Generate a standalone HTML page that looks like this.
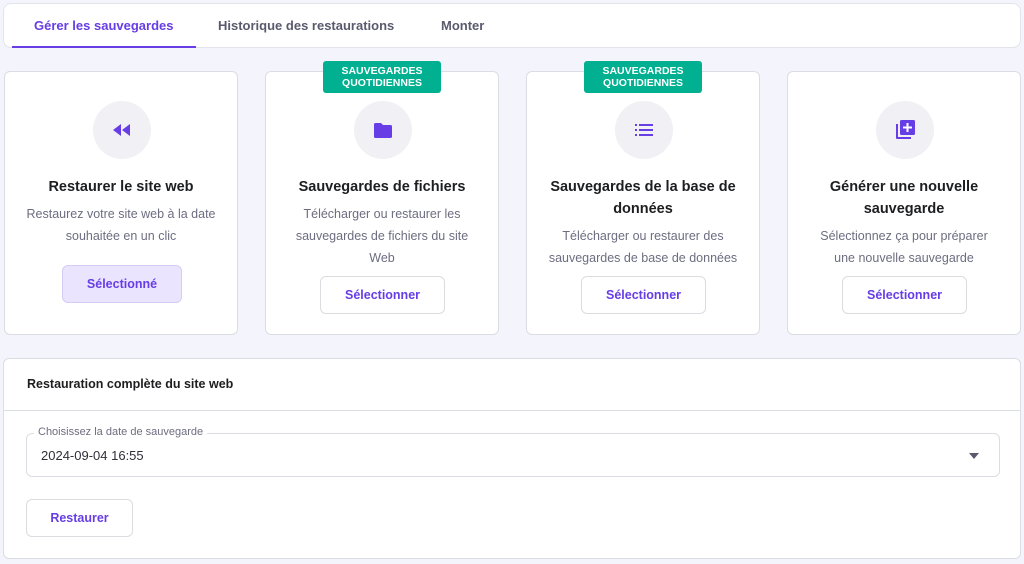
<!DOCTYPE html>
<html><head><meta charset="utf-8"><style>
*{box-sizing:border-box;margin:0;padding:0}
body{width:1024px;height:564px;background:#f4f4fd;font-family:"Liberation Sans",sans-serif;position:relative;overflow:hidden}
.tabs{position:absolute;left:3px;top:3px;width:1018px;height:45px;background:#fff;border:1px solid #e3e3ea;border-radius:8px}
.tab{position:absolute;top:14px;font-size:13px;font-weight:bold;color:#5a5a6e}
.tab.a{color:#673de6}
.ul{position:absolute;left:8px;top:42px;width:184px;height:2px;background:#673de6}
.card{position:absolute;top:71px;width:234px;height:264px;background:#fff;border:1px solid #dcdce3;border-radius:6px;text-align:center}
.circ{position:absolute;left:88px;top:29px;width:58px;height:58px;border-radius:50%;background:#f0f0f5;display:flex;align-items:center;justify-content:center}
.title{position:absolute;left:0;right:0;top:104px;font-size:14.5px;font-weight:bold;color:#1d1e20;line-height:22px;padding:0 20px}
.desc{position:absolute;left:0;right:0;font-size:12.5px;color:#6d6d80;line-height:22px;padding:0 10px}
.btn{position:absolute;height:38px;border:1px solid #dadce0;border-radius:6px;background:#fff;color:#673de6;font-weight:bold;font-size:12.5px;display:flex;align-items:center;justify-content:center}
.badge{position:absolute;top:61px;width:118px;height:32px;background:#00b090;border-radius:3px;color:#fff;font-size:10.5px;font-weight:bold;line-height:12px;text-align:center;padding-top:4px}
.bot{position:absolute;left:3px;top:358px;width:1018px;height:201px;background:#fff;border:1px solid #dcdce3;border-radius:6px}
</style></head><body>
<div class="tabs">
<div class="tab a" style="left:30px">Gérer les sauvegardes</div>
<div class="tab" style="left:214px">Historique des restaurations</div>
<div class="tab" style="left:437px">Monter</div>
<div class="ul"></div>
</div>

<div class="card" style="left:4px">
<div class="circ"><svg width="18" height="12" viewBox="0 0 18 12"><path d="M8 0v12L0 6zM17 0v12L9 6z" fill="#673de6"/></svg></div>
<div class="title">Restaurer le site web</div>
<div class="desc" style="top:131px">Restaurez votre site web à la date souhaitée en un clic</div>
<div class="btn" style="left:57px;top:193px;width:120px;background:#ebe4ff;border-color:#d5cdf5">Sélectionné</div>
</div>

<div class="card" style="left:265px">
<div class="circ"><svg width="18" height="15" viewBox="0 0 18 15"><path d="M0 1.5A1.5 1.5 0 0 1 1.5 0H7l2 2h7.5A1.5 1.5 0 0 1 18 3.5v10a1.5 1.5 0 0 1-1.5 1.5h-15A1.5 1.5 0 0 1 0 13.5z" fill="#673de6"/></svg></div>
<div class="title">Sauvegardes de fichiers</div>
<div class="desc" style="top:131px;padding:0 24px">Télécharger ou restaurer les sauvegardes de fichiers du site Web</div>
<div class="btn" style="left:54px;top:204px;width:125px">Sélectionner</div>
</div>
<div class="badge" style="left:323px">SAUVEGARDES<br>QUOTIDIENNES</div>

<div class="card" style="left:526px">
<div class="circ"><svg width="18" height="12" viewBox="0 0 18 12"><g fill="#673de6"><rect x="0" y="0" width="2" height="2"/><rect x="0" y="5" width="2" height="2"/><rect x="0" y="10" width="2" height="2"/><rect x="4" y="0" width="14" height="2"/><rect x="4" y="5" width="14" height="2"/><rect x="4" y="10" width="14" height="2"/></g></svg></div>
<div class="title">Sauvegardes de la base de données</div>
<div class="desc" style="top:153px">Télécharger ou restaurer des sauvegardes de base de données</div>
<div class="btn" style="left:54px;top:204px;width:125px">Sélectionner</div>
</div>
<div class="badge" style="left:584px">SAUVEGARDES<br>QUOTIDIENNES</div>

<div class="card" style="left:787px">
<div class="circ"><svg width="20" height="20" viewBox="0 0 20 20"><path d="M1 4v14a1 1 0 0 0 1 1h14v-2H3V4z" fill="#673de6"/><rect x="5" y="0" width="15" height="15" rx="1.5" fill="#673de6"/><path d="M12.5 3v9M8 7.5h9" stroke="#fff" stroke-width="2"/></svg></div>
<div class="title">Générer une nouvelle sauvegarde</div>
<div class="desc" style="top:153px;padding:0 24px">Sélectionnez ça pour préparer une nouvelle sauvegarde</div>
<div class="btn" style="left:54px;top:204px;width:125px">Sélectionner</div>
</div>

<div class="bot">
<div style="position:absolute;left:23px;top:18px;font-size:12.5px;font-weight:bold;color:#1d1e20">Restauration complète du site web</div>
<div style="position:absolute;left:0;right:0;top:51px;height:1px;background:#dcdce3"></div>
<div style="position:absolute;left:22px;top:74px;width:974px;height:44px;border:1px solid #dcdce3;border-radius:6px">
<div style="position:absolute;left:7px;top:-8px;background:#fff;padding:0 4px;font-size:11px;color:#6d6d80">Choisissez la date de sauvegarde</div>
<div style="position:absolute;left:14px;top:14px;font-size:13px;color:#2f2f3a">2024-09-04 16:55</div>
<div style="position:absolute;right:20px;top:19px;width:0;height:0;border-left:5px solid transparent;border-right:5px solid transparent;border-top:6px solid #5a5a6e"></div>
</div>
<div class="btn" style="left:22px;top:140px;width:107px">Restaurer</div>
</div>
</body></html>
